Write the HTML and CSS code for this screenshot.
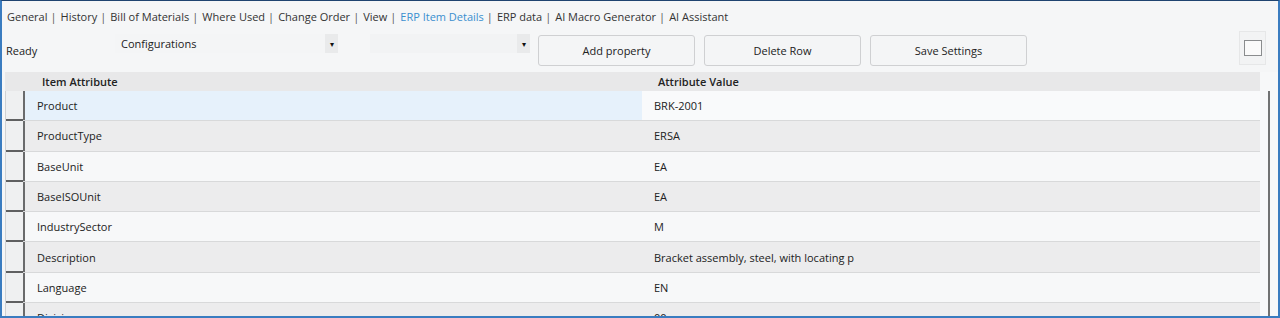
FILE: index.html
```html
<!DOCTYPE html>
<html>
<head>
<meta charset="utf-8">
<link rel="stylesheet" href="styles.css">
</head>
<body>
<div class="window">
  <div class="tabs">
    <span class="tab">General</span><span class="sep">|</span>
    <span class="tab">History</span><span class="sep">|</span>
    <span class="tab">Bill of Materials</span><span class="sep">|</span>
    <span class="tab">Where Used</span><span class="sep">|</span>
    <span class="tab">Change Order</span><span class="sep">|</span>
    <span class="tab">View</span><span class="sep">|</span>
    <span class="tab active">ERP Item Details</span><span class="sep">|</span>
    <span class="tab">ERP data</span><span class="sep">|</span>
    <span class="tab">AI Macro Generator</span><span class="sep">|</span>
    <span class="tab">AI Assistant</span>
  </div>
  <div class="toolbar">
    <div class="status">Ready</div>
    <div class="combo combo-config"><span class="combo-text">Configurations</span><span class="combo-arrow">&#9662;</span></div>
    <div class="combo combo-empty"><span class="combo-text"></span><span class="combo-arrow">&#9662;</span></div>
    <button class="btn">Add property</button>
    <button class="btn">Delete Row</button>
    <button class="btn">Save Settings</button>
    <div class="spacer"></div>
    <div class="checkwrap"><div class="check"></div></div>
  </div>
  <div class="gridarea">
    <div class="grid">
      <div class="ghead">
        <div class="rh-head"></div>
        <div class="c-attr">Item Attribute</div>
        <div class="c-val">Attribute Value</div>
      </div>
      <div class="grow odd selected"><div class="rh"></div><div class="c-attr">Product</div><div class="c-val">BRK-2001</div></div>
      <div class="grow even"><div class="rh"></div><div class="c-attr">ProductType</div><div class="c-val">ERSA</div></div>
      <div class="grow odd"><div class="rh"></div><div class="c-attr">BaseUnit</div><div class="c-val">EA</div></div>
      <div class="grow even"><div class="rh"></div><div class="c-attr">BaseISOUnit</div><div class="c-val">EA</div></div>
      <div class="grow odd"><div class="rh"></div><div class="c-attr">IndustrySector</div><div class="c-val">M</div></div>
      <div class="grow even"><div class="rh"></div><div class="c-attr">Description</div><div class="c-val">Bracket assembly, steel, with locating p</div></div>
      <div class="grow odd"><div class="rh"></div><div class="c-attr">Language</div><div class="c-val">EN</div></div>
      <div class="grow even"><div class="rh"></div><div class="c-attr">Division</div><div class="c-val">00</div></div>
    </div>
    <div class="vscroll"><div class="vline"></div></div>
  </div>
</div>
</body>
</html>
```

FILE: styles.css
```css
* { box-sizing: border-box; }
html, body { margin: 0; padding: 0; }
body {
  width: 1280px;
  height: 318px;
  overflow: hidden;
  background: #ffffff;
  font-family: "Open Sans", "Noto Sans", sans-serif;
  font-size: 11px;
  color: #222;
}
.window {
  width: 1280px;
  height: 318px;
  background: #f5f6f7;
  border-top: 1px solid #1f4470;
  border-left: 2px solid #3a7cc0;
  border-right: 2px solid #3a7cc0;
  border-bottom: 2px solid #3a7cc0;
  overflow: hidden;
  display: flex;
  flex-direction: column;
}
.tabs {
  height: 29px;
  padding: 3px 0 0 5px;
  display: flex;
  align-items: center;
  white-space: nowrap;
  color: #333;
  line-height: 16px;
}
.tab.active { color: #3a8fcf; }
.sep { margin: 0 4px 0 3px; color: #555; }
.toolbar {
  height: 42px;
  display: flex;
  align-items: flex-start;
  padding-top: 4px;
}
.status {
  width: 113px;
  padding: 9px 0 0 4px;
  color: #222;
}
.combo {
  height: 19px;
  display: flex;
  align-items: center;
  background: #f4f5f6;
}
.combo-config { width: 223px; }
.combo-empty { width: 160px; margin-left: 32px; background: #f2f3f4; }
.combo-text { flex: 1; padding-left: 6px; padding-bottom: 1px; }
.combo-arrow {
  width: 13px;
  height: 19px;
  background: #e9eaeb;
  font-size: 8px;
  color: #111;
  display: flex;
  align-items: center;
  justify-content: center;
}
.btn {
  width: 157px;
  height: 31px;
  margin-top: 1px;
  border: 1px solid #cfd0d2;
  border-radius: 3px;
  background: #f4f5f6;
  font-family: inherit;
  font-size: 11px;
  color: #222;
  padding: 0;
}
.combo-empty + .btn { margin-left: 8px; }
.btn + .btn { margin-left: 9px; }
.spacer { flex: 1; }
.checkwrap {
  width: 27px;
  height: 34px;
  margin-top: -3px;
  margin-right: 12px;
  border: 1px solid #e6e7e8;
  display: flex;
  align-items: center;
  justify-content: center;
  background: #f2f3f4;
}
.check {
  width: 18px;
  height: 16px;
  border: 1px solid #8a8c8e;
  background: #fafafa;
}
.gridarea {
  flex: 1;
  display: flex;
  margin-left: 3px;
  min-height: 0;
}
.grid {
  width: 1255px;
  overflow: hidden;
  background: #f7f8f9;
}
.ghead {
  height: 19px;
  display: flex;
  background: #e8e8e9;
  font-weight: 600;
  color: #222;
  line-height: 19px;
}
.ghead .rh-head { width: 20px; }
.ghead .c-attr { width: 617px; padding-left: 17px; display: block; }
.ghead .c-val { flex: 1; padding-left: 16px; display: block; }
.grow {
  height: 30.3px;
  display: flex;
  align-items: center;
  border-bottom: 1px solid #d8d9da;
}
.grow.odd { background: #f7f8f9; }
.grow.even { background: #ececed; }
.rh {
  width: 20px;
  align-self: stretch;
  border-left: 1px solid #d0d1d2;
  border-right: 2px solid #6a6b6c;
  background: #eff0f1;
  position: relative;
}
.rh::after {
  content: "";
  position: absolute;
  left: 0;
  right: 0;
  bottom: -1px;
  height: 2px;
  background: #5f6061;
}
.c-attr {
  width: 617px;
  padding-left: 12px;
  align-self: stretch;
  display: flex;
  align-items: center;
}
.selected .c-attr { background: #e6f1fb; }
.selected .c-val { background: #f9fafb; }
.c-val {
  flex: 1;
  padding-left: 12px;
  align-self: stretch;
  display: flex;
  align-items: center;
}
.vscroll {
  width: 18px;
  position: relative;
  background: #f7f8f9;
}
.vline {
  position: absolute;
  left: 8px;
  top: 19px;
  bottom: 0;
  width: 2px;
  background: #707172;
}
```
